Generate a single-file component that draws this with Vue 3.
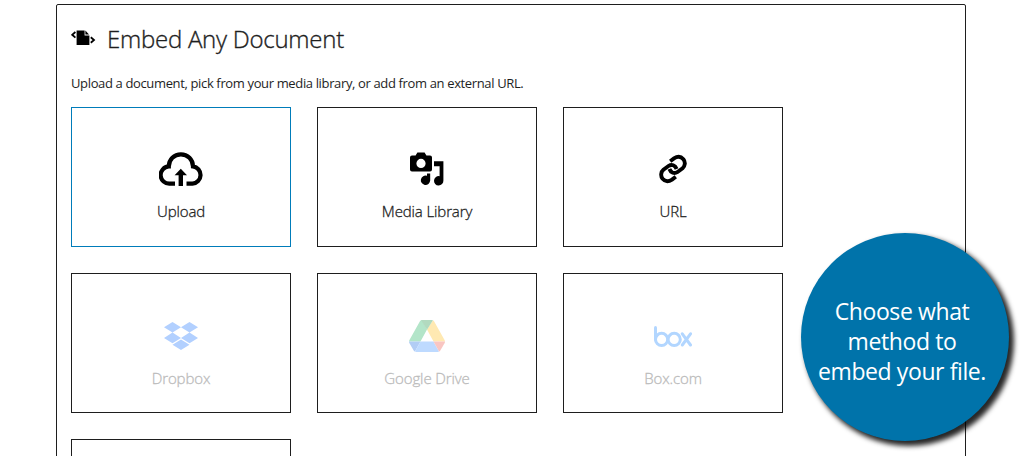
<template>
  <div class="page">
    <main class="embed">
      <header class="embed__header">
        <svg class="embed__logo" width="25" height="18" viewBox="0 0 25 18">
          <path d="M5.6 1.4h8v5h4.8V16H5.6z" />
          <path d="M14.4 1.6L18 5.4H14.4z" />
          <path class="embed__arrow" d="M4.4 3L1.2 5.8L4.4 8.6M19.8 8.2L23 11L19.8 13.8" />
        </svg>
        <h1 class="embed__title">Embed Any Document</h1>
      </header>
      <p class="embed__text">
        <span>Upload a document, pick from your media library, or add from an external URL.</span>
      </p>
      <div class="embed__grid">
        <button
          v-for="item in sources"
          :key="item.id"
          class="source"
          :class="{ 'source--active': selected === item.id, 'source--locked': item.locked }"
          @click="select(item)"
        >
          <span class="source__icon">
            <svg v-if="item.id === 'upload'" width="44" height="34" viewBox="0 0 44 34">
              <path
                class="stroke"
                d="M16 31.7H10.8A8.6 8.6 0 0 1 9.8 14.4A12.1 12.1 0 0 1 34 14.4A8.7 8.7 0 0 1 33.4 31.7H27.5"
              />
              <path d="M21.8 16.8L28 23.2H24V34H19.6V23.2H15.6z" />
            </svg>
            <svg v-else-if="item.id === 'media'" width="34" height="34" viewBox="0 0 34 34">
              <path
                fill-rule="evenodd"
                d="M2 3.4H5.6L7.4 .6H14.6L16.4 3.4H20Q22 3.4 22 5.4V17.6Q22 19.6 20 19.6H2Q0 19.6 0 17.6V5.4Q0 3.4 2 3.4zM11 6.8A4.6 4.6 0 1 0 11 16A4.6 4.6 0 1 0 11 6.8z"
              />
              <path d="M20.2 21.4V28.6A4.7 4.7 0 1 1 17 23.8V21.4z" />
              <path d="M24 9.2H33.4V28.6A4.7 4.7 0 1 1 29.6 24.2V14.2H24z" />
            </svg>
            <svg v-else-if="item.id === 'url'" width="30" height="30" viewBox="0 0 30 30">
              <g class="stroke stroke--link">
                <path d="M12.2 7.2L16 4.4C19.5 2 23 2.4 25.4 5.2C27.6 8 27.2 12 24.6 14.2L19.2 18.2C16.4 20 12.8 18.8 11.4 15" />
                <path
                  d="M12.2 7.2L16 4.4C19.5 2 23 2.4 25.4 5.2C27.6 8 27.2 12 24.6 14.2L19.2 18.2C16.4 20 12.8 18.8 11.4 15"
                  transform="rotate(180 15 15)"
                />
              </g>
            </svg>
            <svg v-else-if="item.id === 'dropbox'" width="34" height="28" viewBox="0 0 34 28">
              <path
                fill="#b2d0ff"
                d="M8.5 0L17 5.3L8.5 10.6L0 5.3zM25.5 0L34 5.3L25.5 10.6L17 5.3zM8.5 10.6L17 15.9L8.5 21.2L0 15.9zM25.5 10.6L34 15.9L25.5 21.2L17 15.9zM17 17.4L25.5 22.7L17 28L8.5 22.7z"
              />
            </svg>
            <svg v-else-if="item.id === 'drive'" width="36" height="32" viewBox="0 0 36 32">
              <path fill="#b3e5c9" d="M12 .2Q12.2 0 12.8 0L18 9.6L11.5 21.6H0Q0 20.7 .6 19.7L10.8 1.5Q11.3 .5 12 .2z" />
              <path fill="#ffe9b2" d="M24 .2Q24.7 .6 25.2 1.5L35.4 19.7Q36 20.7 36 21.6H24.5L18 9.6z" />
              <path fill="#b2dabf" d="M12 .2Q12.6 0 13.4 0H22.6Q23.4 0 24 .2L18 9.8z" />
              <path fill="#b2cdf5" d="M0 21.6H11.5L5.9 31.6Q5.2 31.2 4.7 30.4L.6 23.6Q0 22.6 0 21.6z" />
              <path fill="#bedaff" d="M11.5 21.6H24.5L30.1 31.6Q29.4 32 28.6 32H7.4Q6.6 32 5.9 31.6z" />
              <path fill="#f9c6c2" d="M24.5 21.6H36Q36 22.6 35.4 23.6L31.3 30.4Q30.8 31.2 30.1 31.6z" />
            </svg>
            <svg v-else-if="item.id === 'box'" width="38" height="21" viewBox="0 0 38 21">
              <g class="box-mark">
                <path d="M1.5 1.5V13.5" />
                <circle cx="7.6" cy="13.4" r="6.1" />
                <circle cx="20.2" cy="13.4" r="6.1" />
                <path d="M28.3 7.8L36.5 19M36.5 7.8L28.3 19" />
              </g>
            </svg>
          </span>
          <span class="source__label">{{ item.label }}</span>
        </button>
      </div>
    </main>
    <aside class="callout">
      <span>Choose what</span>
      <span>method to</span>
      <span>embed your file.</span>
    </aside>
  </div>
</template>

<script setup>
import { ref } from "vue";

const sources = [
  { id: "upload", label: "Upload" },
  { id: "media", label: "Media Library" },
  { id: "url", label: "URL" },
  { id: "dropbox", label: "Dropbox", locked: true },
  { id: "drive", label: "Google Drive", locked: true },
  { id: "box", label: "Box.com", locked: true },
  { id: "more", label: "", locked: true },
];

const selected = ref("upload");

const select = (item) => {
  if (!item.locked) {
    selected.value = item.id;
  }
};
</script>

<style>
body {
  background: #fff;
  overflow: hidden;
}
</style>

<style scoped>
.page {
  position: relative;
  height: 456px;
  padding: 4px 58px 0 56px;
  box-sizing: border-box;
  overflow: hidden;
  font-family: "Open Sans", "Noto Sans", sans-serif;
  color: #1e1e1e;
}
.embed {
  height: 620px;
  padding: 18px 14px;
  box-sizing: border-box;
  border: 1px solid #1e1e1e;
  border-radius: 2px;
}
.embed__header {
  display: flex;
  align-items: center;
  gap: 11px;
  height: 34px;
}
.embed__logo {
  margin-bottom: 4px;
  fill: #000;
}
.embed__arrow {
  fill: none;
  stroke: #000;
  stroke-width: 1.8;
}
.embed__title {
  margin: 0 0 2px;
  font-size: 24px;
  font-weight: 300;
  line-height: 34px;
  letter-spacing: -0.25px;
  white-space: nowrap;
  -webkit-text-stroke: 0.35px currentColor;
}
.embed__text {
  margin: 17px 0 14px;
  font-size: 13px;
  line-height: 19px;
  white-space: nowrap;
}
.embed__text span {
  letter-spacing: -0.36px;
}
.embed__grid {
  display: grid;
  grid-template-columns: repeat(3, 220px);
  grid-auto-rows: 140px;
  gap: 26px;
}
.source {
  display: flex;
  flex-direction: column;
  align-items: center;
  padding: 39px 0 0;
  border: 1px solid #1e1e1e;
  background: #fff;
  color: #1e1e1e;
  font-family: inherit;
  cursor: pointer;
}
.source--active {
  border-color: #007cba;
}
.source--locked {
  padding-top: 40px;
  color: #bbb;
}
.source__icon {
  display: flex;
  align-items: center;
  justify-content: center;
  height: 44px;
}
.source__label {
  margin-top: 9px;
  font-size: 15px;
  font-weight: 300;
  line-height: 22px;
  letter-spacing: -0.12px;
  -webkit-text-stroke: 0.3px currentColor;
}
.stroke {
  fill: none;
  stroke: #000;
  stroke-width: 4.2;
}
.stroke--link {
  stroke-width: 3.9;
}
.box-mark {
  fill: none;
  stroke: #b2d6ff;
  stroke-width: 3;
  stroke-linecap: round;
}
.callout {
  position: absolute;
  left: 801px;
  top: 233px;
  display: flex;
  flex-direction: column;
  align-items: center;
  width: 208px;
  height: 208px;
  padding: 63px 6px 0 0;
  box-sizing: border-box;
  border-radius: 50%;
  background: #0073aa;
  box-shadow: 4px 4px 5px 1px rgba(0, 0, 0, 0.85);
  color: #fff;
  font-size: 23px;
  line-height: 30px;
  letter-spacing: -0.4px;
  white-space: nowrap;
}
</style>
